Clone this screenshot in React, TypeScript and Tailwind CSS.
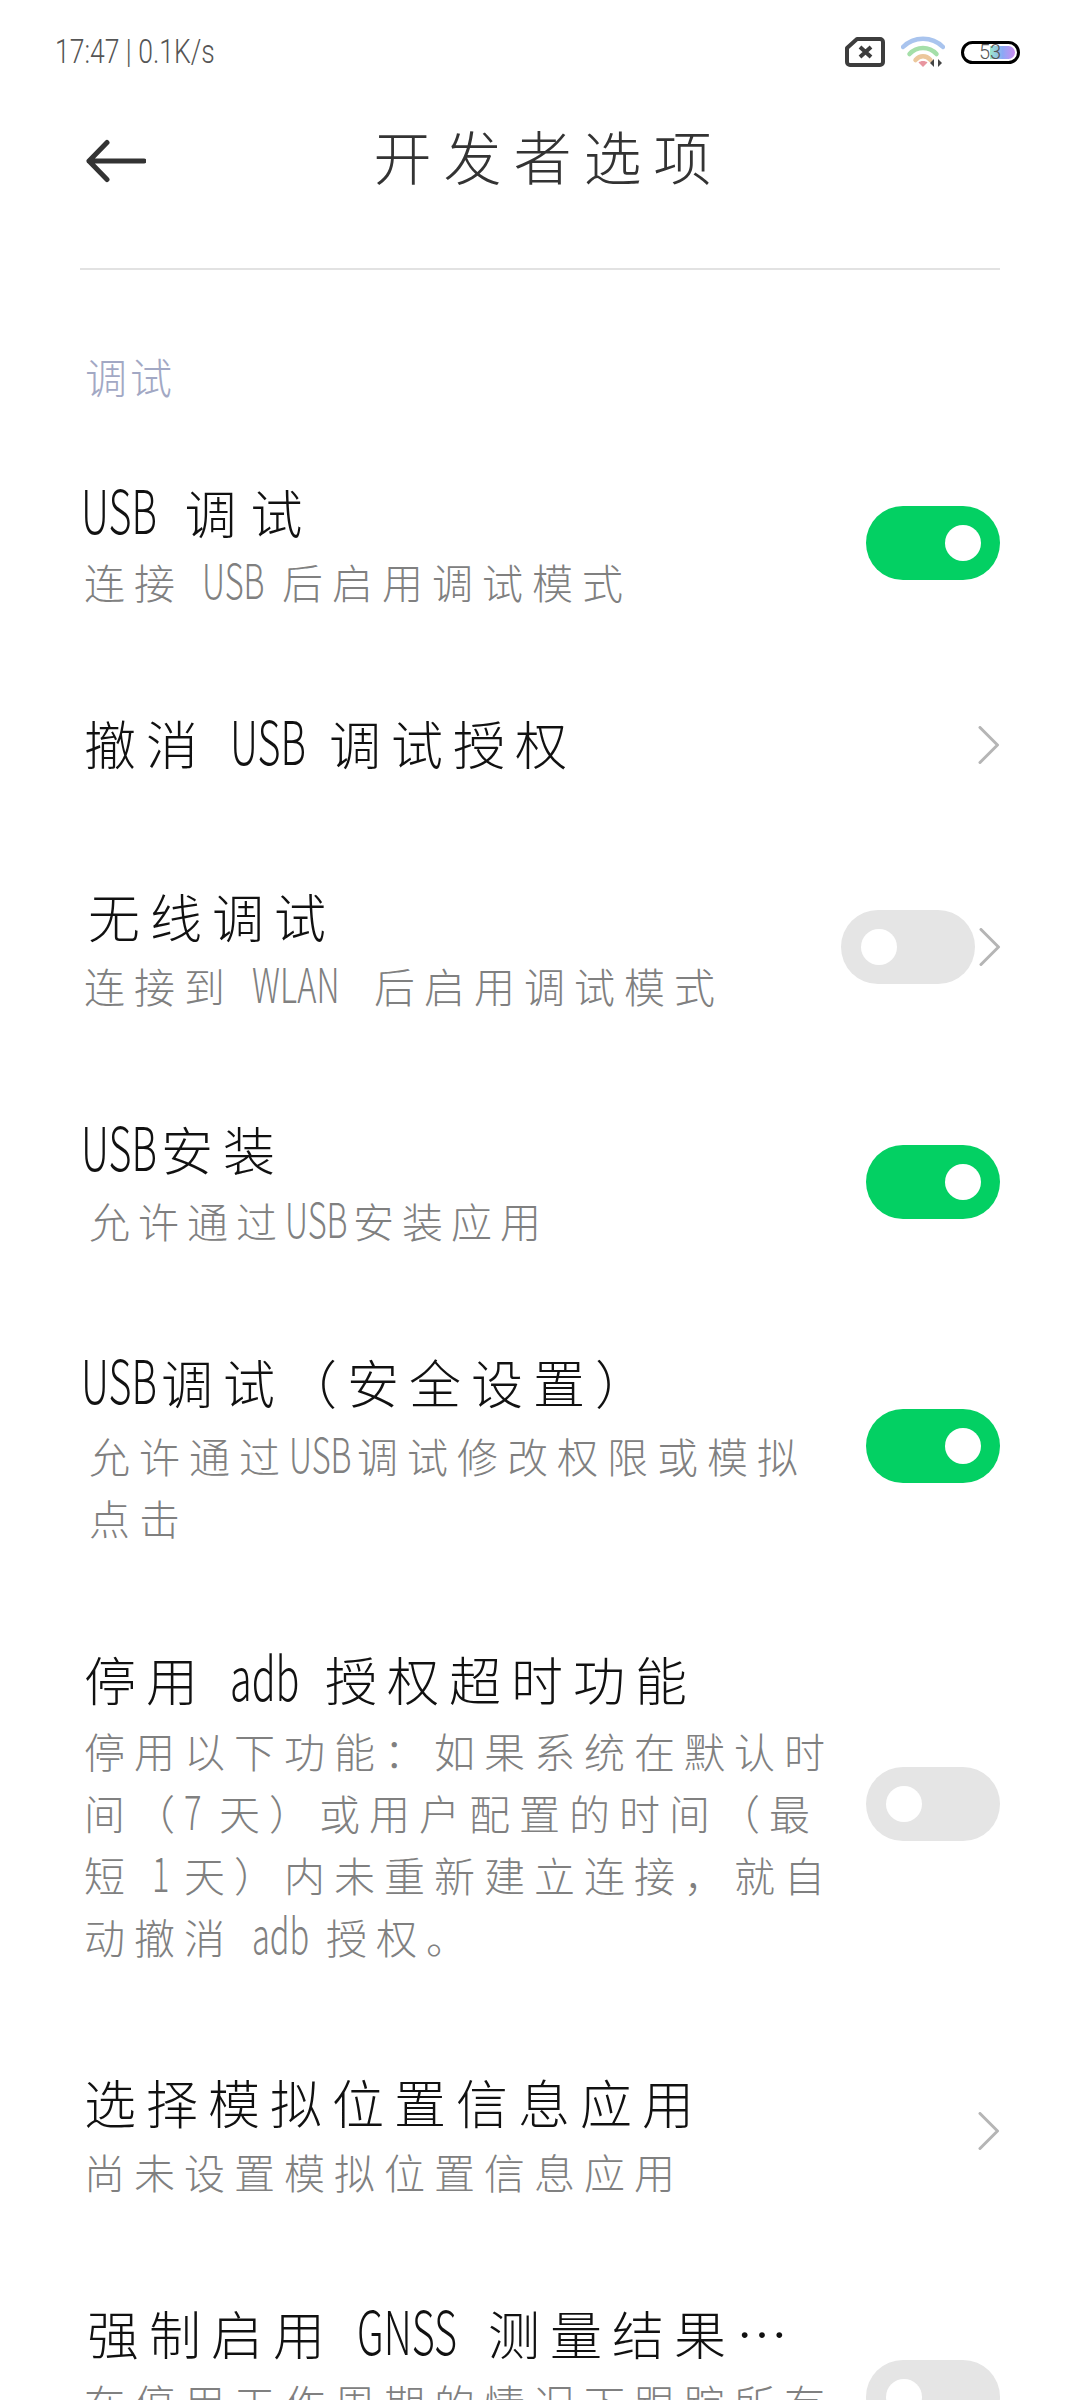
import React from 'react';

const FONT = "font-['Noto_Sans_CJK_SC','Noto_Sans',sans-serif]";

const Toggle: React.FC<{ on?: boolean }> = ({ on }) => (
  <div
    className={`w-[134px] h-[74px] shrink-0 rounded-[37px] flex items-center ${
      on ? 'bg-[#03d063] justify-end pr-[19px]' : 'bg-[#e5e5e5] justify-start pl-[20px]'
    }`}
  >
    <div className="w-[36px] h-[36px] rounded-full bg-white" />
  </div>
);

const Chevron: React.FC = () => (
  <svg width="22" height="38" viewBox="0 0 22 38" className="shrink-0" fill="none">
    <path d="M2 1.5 L19.5 19 L2 36.5" stroke="#b5b5b5" strokeWidth="3" strokeLinecap="round" strokeLinejoin="round" />
  </svg>
);

const Row: React.FC<{
  title: React.ReactNode;
  lines?: React.ReactNode[];
  className?: string;
  subClass?: string;
  trailClass?: string;
  children?: React.ReactNode;
}> = ({ title, lines, className = 'py-12', subClass = 'mt-[3px]', trailClass = '', children }) => (
  <div className={`flex items-center justify-between pl-[84px] pr-[80px] ${className}`}>
    <div className="min-w-0">
      <div className="text-[52px] leading-[70px] tracking-[10px] font-light text-[#111] whitespace-nowrap">{title}</div>
      {lines && (
        <div className={`${subClass} text-[41px] leading-[62px] tracking-[9px] font-light text-[#808080] whitespace-nowrap`}>
          {lines.map((l, i) => (
            <div key={i}>{l}</div>
          ))}
        </div>
      )}
    </div>
    <div className={trailClass}>{children}</div>
  </div>
);

// latin runs in the title: tall and squeezed, box width set by hand
const T: React.FC<{ className: string; children: React.ReactNode }> = ({ className, children }) => (
  <span className={`inline-block origin-left text-[60px] leading-none tracking-[0px] scale-x-[0.66] ${className}`}>{children}</span>
);

// same for the grey second line
const S: React.FC<{ className: string; children: React.ReactNode }> = ({ className, children }) => (
  <span className={`inline-block origin-left text-[48px] leading-none tracking-[0px] scale-x-[0.68] ${className}`}>{children}</span>
);

export default function App() {
  return (
    <div className={`w-[1080px] h-[2400px] overflow-hidden bg-white ${FONT}`}>
      <div className="h-[104px] flex items-center justify-between pl-[55px] pr-[60px]">
        <span className="inline-block origin-left scale-x-[0.78] -mt-[2px] text-[34px] font-light tracking-[0px] text-[#555] whitespace-nowrap font-['Roboto',sans-serif]">17:47 | 0.1K/s</span>
        <div className="flex items-center gap-[16px]">
          <svg width="40" height="30" viewBox="0 0 40 30" fill="none">
            <path d="M12 2 H35 a3 3 0 0 1 3 3 V25 a3 3 0 0 1 -3 3 H5 a3 3 0 0 1 -3 -3 V11 Z" stroke="#3d3d3d" strokeWidth="4" strokeLinejoin="round" />
            <path d="M15 10 L26 20 M26 10 L15 20" stroke="#3d3d3d" strokeWidth="4" />
          </svg>
          <svg width="44" height="32" viewBox="0 0 44 32" fill="none">
            <path d="M2 11 C13 0 31 0 42 11" stroke="#a9c4ee" strokeWidth="4.5" strokeLinecap="round" />
            <path d="M8.5 18 C16 10 28 10 35.5 18" stroke="#a5dfa9" strokeWidth="4.5" strokeLinecap="round" />
            <path d="M14.5 24 C19 19 25 19 29.5 24" stroke="#ecc79c" strokeWidth="4.5" strokeLinecap="round" />
            <path d="M22 31 L17.5 26.5 C19.5 24.5 24.5 24.5 26.5 26.5 Z" fill="#e8959f" />
            <path d="M33 23 V31 L29 27 Z M37 23 V31 L41 27 Z" fill="#444" />
          </svg>
          <div className="relative w-[59px] h-[23px] rounded-full border-[3px] border-black overflow-hidden flex items-center">
            <div className="absolute left-[26px] top-[2px] bottom-[2px] right-[2px] rounded-r-full bg-gradient-to-r from-[#9de8c8] via-[#8aa8f5] to-[#c98af0]" />
            <span className="relative ml-[15px] text-[20px] leading-none font-light text-[#555] font-['Roboto',sans-serif]">53</span>
          </div>
        </div>
      </div>

      <div className="h-[110px] relative flex items-center justify-center">
        <svg width="60" height="48" viewBox="0 0 60 48" fill="none" className="absolute left-[86px] top-[33px]">
          <path d="M21 5.5 L3 24 L21 42.5 M3 24 H58" stroke="#333" strokeWidth="5" strokeLinecap="round" strokeLinejoin="round" />
        </svg>
        <span className="text-[58px] tracking-[12px] font-light text-[#333] -mt-[8px] ml-[17px]">开发者选项</span>
      </div>

      <div className="mt-[54px] mx-[80px] h-[2px] bg-[#e2e2e2]" />

      <div className="mt-[76px] pl-[85px] text-[42px] leading-[60px] tracking-[3px] font-light text-[#a2a8c4]">调试</div>

      <div className="mt-[23px]">
        <Row
          title={<><T className="w-[78px] -ml-[3px]">USB</T> <span className="ml-[4px] tracking-[14px]">调试</span></>}
          lines={[<>连接 <S className="w-[62px]">USB</S> 后启用调试模式</>]}
          trailClass="-mt-[3px]"
        >
          <Toggle on />
        </Row>
        <Row title={<>撤消 <T className="w-[78px]">USB</T> 调试授权</>} className="pt-12 pb-[55px]" trailClass="mt-[3px]">
          <Chevron />
        </Row>
        <Row
          title={<span className="ml-[4px]">无线调试</span>}
          lines={[<>连接到 <S className="w-[104px]">WLAN</S> 后启用调试模式</>]}
          trailClass="-mt-[3px]"
        >
          <div className="flex items-center gap-[4px] -mr-[1px]">
            <Toggle />
            <Chevron />
          </div>
        </Row>
        <Row
          title={<><T className="w-[80px] -ml-[3px]">USB</T>安装</>}
          lines={[<span className="ml-[5px] tracking-[8px]">允许通过<S className="w-[68px]">USB</S>安装应用</span>]}
          className="pt-[50px] pb-12"
          subClass="mt-[5px]"
          trailClass="-mt-[1px]"
        >
          <Toggle on />
        </Row>
        <Row
          title={<><T className="w-[80px] -ml-[3px]">USB</T>调试（安全设置）</>}
          lines={[<span className="ml-[5px]">允许通过<S className="w-[68px]">USB</S>调试修改权限或模拟</span>, <span className="ml-[5px]">点击</span>]}
          subClass="mt-[7px]"
          trailClass="-mt-[3px]"
        >
          <Toggle on />
        </Row>
        <Row
          title={<>停用 <T className="w-[74px]">adb</T> 授权超时功能</>}
          lines={[
            '停用以下功能：如果系统在默认时',
            <>间（<S className="w-[17px]">7</S> 天）或用户配置的时间（最</>,
            <>短 <S className="w-[18px] mr-[14px]">1</S>天）内未重新建立连接，就自</>,
            <>动撤消 <S className="w-[56px]">adb</S> 授权。</>,
          ]}
          subClass="mt-[5px]"
          trailClass="-mt-[3px]"
        >
          <Toggle />
        </Row>
        <Row title="选择模拟位置信息应用" lines={['尚未设置模拟位置信息应用']} className="pt-[52px] pb-12" trailClass="-mt-[7px]">
          <Chevron />
        </Row>
        <Row
          title={<span className="ml-[3px]">强制启用 <T className="w-[110px]">GNSS</T> 测量结果…</span>}
          lines={['在停用工作周期的情况下跟踪所有']}
          className="pt-12 pb-0 items-start"
          trailClass="mt-[62px]"
        >
          <Toggle />
        </Row>
      </div>
    </div>
  );
}
